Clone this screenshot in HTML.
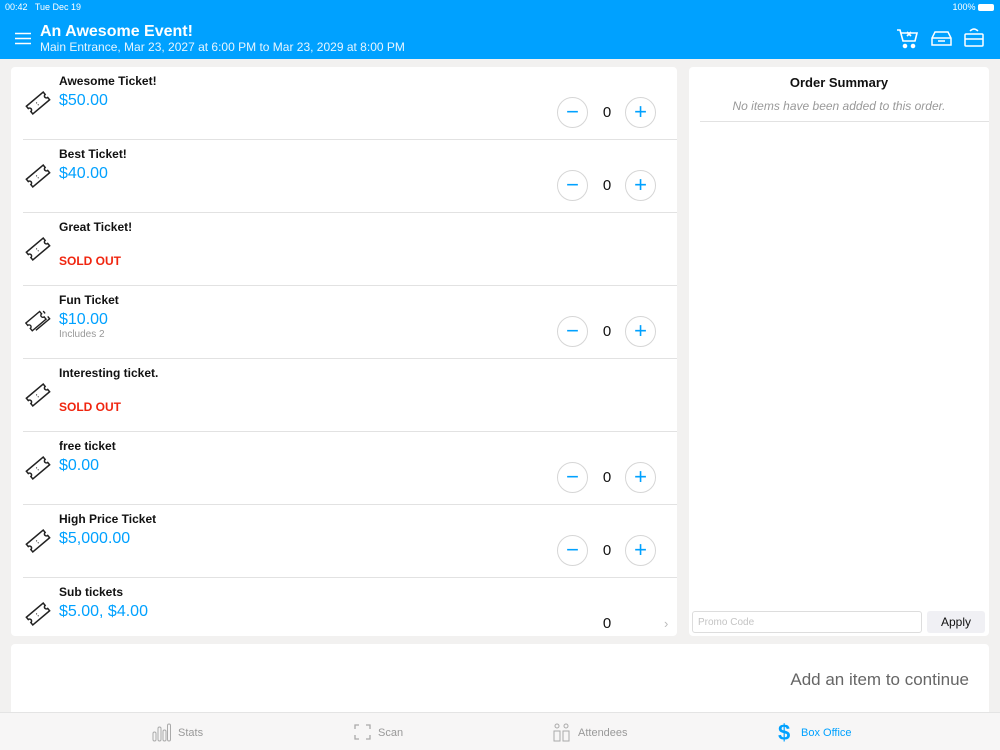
<!DOCTYPE html>
<html><head><meta charset="utf-8"><style>
*{margin:0;padding:0;box-sizing:border-box}
body{width:1000px;height:750px;overflow:hidden;background:#f2f1f0;font-family:"Liberation Sans",sans-serif;position:relative}
.hdr{position:absolute;left:0;top:0;width:1000px;height:59px;background:#00a1ff;color:#fff}
.card{position:absolute;background:#fff;border-radius:4px}
.row{position:absolute;left:0;width:666px;height:73px}
.row .sep{position:absolute;left:12px;right:0;bottom:0;height:1px;background:#e2e2e2}
.nm{position:absolute;left:48px;top:7px;font-size:12px;font-weight:bold;color:#111}
.pr{position:absolute;left:48px;top:25px;font-size:16px;color:#00a1ff}
.so{position:absolute;left:48px;top:41px;font-size:12px;font-weight:bold;color:#f0250f}
.inc{position:absolute;left:48px;top:43px;font-size:10px;color:#999}
.btn{position:absolute;top:30px;width:31px;height:31px;border:1px solid #d6d6d6;border-radius:50%;color:#00a1ff;text-align:center;line-height:28px;font-size:22px}
.q{position:absolute;left:590px;top:37px;width:12px;text-align:center;font-size:15px;color:#111}
.ic{position:absolute;left:14px;top:23px}
.tab{position:absolute;top:727px;font-size:11px;color:#999}
</style></head><body>
<svg width="0" height="0" style="position:absolute"><defs><g id="tk" fill="none" stroke="#222" stroke-width="1.5"><g transform="rotate(-40 13 13)"><path d="M2 8H24V11A2 2 0 0 0 24 15V18H2V15A2 2 0 0 0 2 11Z"/><path d="M12 11.5v1M12 14v1" stroke-width="1"/></g></g></defs></svg>
<div class="hdr">
<div style="position:absolute;left:5px;top:2px;font-size:9px">00:42&nbsp;&nbsp; Tue Dec 19</div>
<div style="position:absolute;right:6px;top:2px;font-size:9px">100% <span style="display:inline-block;width:16px;height:7px;background:#fff;border-radius:2px;vertical-align:-1px"></span></div>
<svg style="position:absolute;left:15px;top:32px" width="17" height="13"><path d="M0 1.5H16M0 6.5H16M0 11.5H16" stroke="#fff" stroke-width="1.6"/></svg>
<div style="position:absolute;left:40px;top:23px;font-size:16px;font-weight:bold">An Awesome Event!</div>
<div style="position:absolute;left:40px;top:40px;font-size:12px;color:#e6f5ff">Main Entrance, Mar 23, 2027 at 6:00 PM to Mar 23, 2029 at 8:00 PM</div>
<svg style="position:absolute;left:896px;top:28px" width="24" height="21" fill="none" stroke="#fff" stroke-width="1.6"><path d="M1 2H4L7 13H19L21 5H5"/><path d="M11 4L15 8M15 4L11 8"/><circle cx="9" cy="18" r="1.5" fill="#fff"/><circle cx="17" cy="18" r="1.5" fill="#fff"/></svg>
<svg style="position:absolute;left:931px;top:31px" width="21" height="15" fill="none" stroke="#fff" stroke-width="1.5"><path d="M4 1H17L20 7V14H1V7Z"/><path d="M1 7H20M7 10H14"/></svg>
<svg style="position:absolute;left:964px;top:27px" width="20" height="21" fill="none" stroke="#fff" stroke-width="1.5"><path d="M6 4Q10 0 14 4"/><rect x="1" y="7" width="18" height="12" rx="1"/><path d="M1 12H19"/></svg>
</div>

<div class="card" style="left:11px;top:67px;width:666px;height:569px">
<div class="row" style="top:0"><svg class="ic" width="26" height="26"><use href="#tk"/></svg><div class="nm">Awesome Ticket!</div><div class="pr">$50.00</div><div class="btn" style="left:546px">−</div><div class="q">0</div><div class="btn" style="left:614px">+</div><div class="sep"></div></div>
<div class="row" style="top:73px"><svg class="ic" width="26" height="26"><use href="#tk"/></svg><div class="nm">Best Ticket!</div><div class="pr">$40.00</div><div class="btn" style="left:546px">−</div><div class="q">0</div><div class="btn" style="left:614px">+</div><div class="sep"></div></div>
<div class="row" style="top:146px"><svg class="ic" width="26" height="26"><use href="#tk"/></svg><div class="nm">Great Ticket!</div><div class="so">SOLD OUT</div><div class="sep"></div></div>
<div class="row" style="top:219px"><svg class="ic" width="26" height="26" fill="none" stroke="#222" stroke-width="1.4"><g transform="rotate(-40 13 13)"><path d="M3 6H21V9A2 2 0 0 0 21 13V16H3V13A2 2 0 0 0 3 9Z"/><path d="M6 18H24V15M24 11V8"/></g></svg><div class="nm">Fun Ticket</div><div class="pr">$10.00</div><div class="inc">Includes 2</div><div class="btn" style="left:546px">−</div><div class="q">0</div><div class="btn" style="left:614px">+</div><div class="sep"></div></div>
<div class="row" style="top:292px"><svg class="ic" width="26" height="26"><use href="#tk"/></svg><div class="nm">Interesting ticket.</div><div class="so">SOLD OUT</div><div class="sep"></div></div>
<div class="row" style="top:365px"><svg class="ic" width="26" height="26"><use href="#tk"/></svg><div class="nm">free ticket</div><div class="pr">$0.00</div><div class="btn" style="left:546px">−</div><div class="q">0</div><div class="btn" style="left:614px">+</div><div class="sep"></div></div>
<div class="row" style="top:438px"><svg class="ic" width="26" height="26"><use href="#tk"/></svg><div class="nm">High Price Ticket</div><div class="pr">$5,000.00</div><div class="btn" style="left:546px">−</div><div class="q">0</div><div class="btn" style="left:614px">+</div><div class="sep"></div></div>
<div class="row" style="top:511px"><svg class="ic" width="26" height="26"><use href="#tk"/></svg><div class="nm">Sub tickets</div><div class="pr">$5.00, $4.00</div><div class="q">0</div><div style="position:absolute;left:653px;top:38px;font-size:13px;color:#bbb">›</div></div>
</div>

<div class="card" style="left:689px;top:67px;width:300px;height:569px">
<div style="position:absolute;left:0;width:300px;top:8px;text-align:center;font-size:13px;font-weight:bold;color:#111">Order Summary</div>
<div style="position:absolute;left:0;width:300px;top:32px;text-align:center;font-size:12px;font-style:italic;color:#999">No items have been added to this order.</div>
<div style="position:absolute;left:11px;right:0;top:54px;height:1px;background:#e2e2e2"></div>
<div style="position:absolute;left:3px;top:544px;width:230px;height:22px;border:1px solid #ddd;border-radius:3px;font-size:10px;color:#c4c4c4;padding:5px 5px">Promo Code</div>
<div style="position:absolute;left:238px;top:544px;width:58px;height:22px;background:#f0f0f4;border-radius:3px;font-size:12px;color:#111;text-align:center;line-height:22px">Apply</div>
</div>

<div class="card" style="left:11px;top:644px;width:978px;height:75px">
<div style="position:absolute;right:20px;top:26px;font-size:17px;color:#666">Add an item to continue</div>
</div>
<div style="position:absolute;left:0;top:712px;width:1000px;height:38px;background:#f7f6f6;border-top:1px solid #e4e4e4"></div>
<svg style="position:absolute;left:152px;top:723px" width="19" height="19" fill="none" stroke="#aaa" stroke-width="1"><rect x="1" y="9" width="3" height="9" rx="1.5"/><rect x="6" y="4" width="3" height="14" rx="1.5"/><rect x="11" y="7" width="3" height="11" rx="1.5"/><rect x="15.5" y="1" width="3" height="17" rx="1.5"/></svg>
<div class="tab" style="left:178px">Stats</div>
<svg style="position:absolute;left:354px;top:724px" width="17" height="16" fill="none" stroke="#aaa" stroke-width="1.3"><path d="M1 5V1H5M12 1H16V5M16 11V15H12M5 15H1V11"/></svg>
<div class="tab" style="left:378px">Scan</div>
<svg style="position:absolute;left:553px;top:723px" width="17" height="19" fill="none" stroke="#aaa" stroke-width="1"><circle cx="4" cy="3" r="2"/><circle cx="13" cy="3" r="2"/><path d="M1 8H7V18H1ZM10 8H16V18H10Z"/></svg>
<div class="tab" style="left:578px">Attendees</div>
<div style="position:absolute;left:778px;top:720px;font-size:22px;font-weight:bold;color:#00a1ff">$</div>
<div class="tab" style="left:801px;color:#00a1ff">Box Office</div>
</body></html>
